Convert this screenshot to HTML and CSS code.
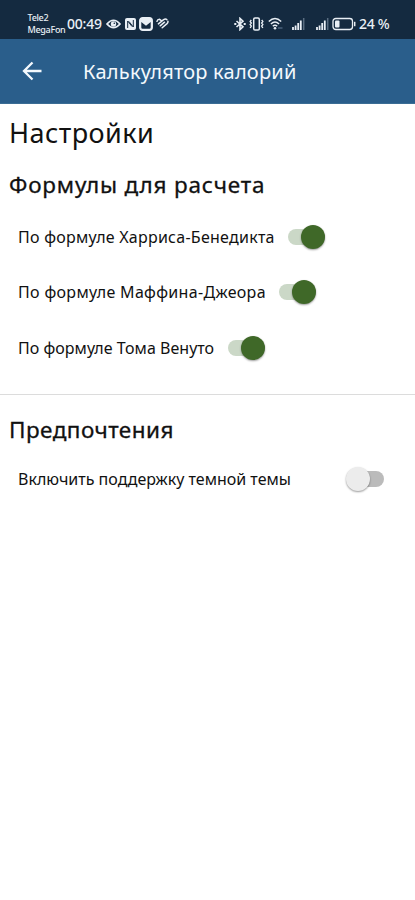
FILE: index.html
```html
<!DOCTYPE html>
<html lang="ru">
<head>
<meta charset="utf-8">
<title>Калькулятор калорий</title>
<link rel="stylesheet" href="styles.css">
</head>
<body>
<header class="status">
  <div class="carriers"><span>Tele2</span><span>MegaFon</span></div>
  <span class="time">00:49</span>
  <svg class="eye" width="15" height="12" viewBox="0 0 15 12"><path d="M1 6Q7.500-1.500 14 6Q7.500 13.500 1 6Z" fill="none" stroke="#e9eff5" stroke-width="1.700"/><circle cx="7.500" cy="6" r="2.700" fill="#e9eff5"/><circle cx="8.300" cy="5.200" r=".8" fill="#142a40"/></svg>
  <svg class="nfc" width="11" height="12" viewBox="0 0 11 12"><rect width="11" height="12" rx="2" fill="#e9eff5"/><path d="M2.700 10V3L7 8.500M8.300 2V9L4 3.500" fill="none" stroke="#142a40" stroke-width="1"/></svg>
  <svg class="mail" width="14" height="14" viewBox="0 0 14 14"><rect x=".7" y=".7" width="12.600" height="12.600" rx="3" fill="#e9eff5" stroke="#e9eff5" stroke-width="1.300"/><path d="M2.300 5L7 8.800L11.700 5V10.500Q11.700 11.700 10.500 11.700H3.500Q2.300 11.700 2.300 10.500Z" fill="#142a40"/></svg>
  <svg class="heart" width="13" height="11" viewBox="0 0 13 11"><path d="M1 3.300Q1.400 1.300 3.500 1.300L5 2.400M2.400 5.900L7.600 1.700Q9.500 .5 10.800 1.600M4.200 7.800L8.500 4.200M6.200 9.800L11 5.600Q12.200 4.400 11.900 3.200" fill="none" stroke="#e9eff5" stroke-width="1.500" stroke-linecap="round"/></svg>
  <svg class="bt" width="12" height="14" viewBox="0 0 12 14"><path d="M2.500 4L9 9.800L6 12.600V1.400L9 4.200L2.500 10" fill="none" stroke="#e9eff5" stroke-width="1.600"/><path d="M.3 7H2.300M9.700 7H11.700" stroke="#e9eff5" stroke-width="1.900"/></svg>
  <svg class="vibe" width="15" height="14" viewBox="0 0 15 14"><rect x="4.700" y="1" width="5.600" height="12" rx="1.300" fill="none" stroke="#e9eff5" stroke-width="1.500"/><path d="M2.300 3L1.200 4.500L2.300 6L1.200 7.500L2.300 9L1.200 11M12.700 3L13.800 4.500L12.700 6L13.800 7.500L12.700 9L13.800 11" fill="none" stroke="#e9eff5" stroke-width="1.400"/></svg>
  <svg class="wifi" width="15" height="13" viewBox="0 0 15 13"><path d="M.8 4.500Q7 -1.500 13.200 4.500M2.900 7Q7 3.100 11.100 7M4.800 9.300Q7 7.200 9.200 9.300" fill="none" stroke="#e9eff5" stroke-width="1.500"/><circle cx="7" cy="11.300" r="1.300" fill="#e9eff5"/><path d="M10 11H14.500" stroke="#48617a" stroke-width="1.500"/></svg>
  <svg class="sig1" width="13" height="12" viewBox="0 0 13 12"><path d="M1 9V12M3.600 7.500V12M6.200 5V12M8.800 2.500V12" stroke="#e9eff5" stroke-width="1.800"/><path d="M11.700 0V12" stroke="#586c80" stroke-width="1.500"/></svg>
  <svg class="sig2" width="13" height="12" viewBox="0 0 13 12"><path d="M1 9V12M3.600 7.500V12M6.200 5V12M8.800 2.500V12" stroke="#e9eff5" stroke-width="1.800"/><path d="M11.700 0V12" stroke="#586c80" stroke-width="1.500"/></svg>
  <svg class="battery" width="24" height="14" viewBox="0 0 24 14"><rect x="1" y="1.500" width="19.500" height="11" rx="2.800" fill="none" stroke="#e9eff5" stroke-width="1.300"/><rect x="3" y="3.500" width="4.500" height="7" rx="1" fill="#e9eff5"/><path d="M22.700 4.800V9.200" stroke="#e9eff5" stroke-width="1.500"/></svg>
  <span class="percent">24 %</span>
</header>
<nav class="appbar">
  <svg width="20" height="20" viewBox="0 0 20 20"><path d="M19.500 10H2M10.500 1.500L2 10L10.500 18.500" fill="none" stroke="#f4f9fd" stroke-width="2.300"/></svg>
  <span class="title">Калькулятор калорий</span>
</nav>
<main>
  <h1>Настройки</h1>
  <section class="formulas">
    <h2 class="h-formulas">Формулы для расчета</h2>
    <div class="row"><span class="harris">По формуле Харриса-Бенедикта</span><i class="switch on"></i></div>
    <div class="row"><span class="muffin">По формуле Маффина-Джеора</span><i class="switch on"></i></div>
    <div class="row"><span class="venuto">По формуле Тома Венуто</span><i class="switch on"></i></div>
  </section>
  <section class="prefs">
    <h2 class="h-prefs">Предпочтения</h2>
    <div class="row"><span class="dark">Включить поддержку темной темы</span><i class="switch"></i></div>
  </section>
</main>
</body>
</html>
```
FILE: styles.css
```css
* { box-sizing: border-box; }
body { margin: 0; width: 415px; height: 900px; background: #fff; color: #111; font-family: "Noto Sans", sans-serif; overflow: hidden; }
span, h1, h2 { white-space: nowrap; }
svg { flex: none; display: block; }
.status { height: 39px; padding: 8px 0 0 27.500px; display: flex; align-items: center; background: #142a40; color: #e9eff5; }
.carriers { width: 39.500px; display: flex; flex-direction: column; font-size: 9px; line-height: 12px; font-weight: 500; letter-spacing: -.3px; }
.time { width: 39px; font-size: 14px; line-height: 18px; font-weight: 500; letter-spacing: -.2px; }
.nfc { margin-left: 4px; }
.mail { margin-left: 3px; }
.heart { margin-left: 3px; }
.bt { margin-left: 65px; }
.vibe { margin-left: 3px; }
.wifi { margin-left: 4px; }
.sig1 { margin-left: 9px; }
.sig2 { margin-left: 11px; }
.battery { margin-left: 3px; }
.percent { margin-left: 3px; font-size: 14px; line-height: 18px; font-weight: 500; letter-spacing: -.3px; }
.appbar { height: 65px; padding-left: 22px; display: flex; align-items: center; background: #2a5e8b; border-bottom: 1px solid #3b6d94; }
.title { margin: 2px 0 0 41px; color: #f4f9fd; font-size: 20px; line-height: 28px; letter-spacing: .22px; }
h1, h2 { margin: 0; padding-left: 9px; }
h1 { padding-top: 11px; font-size: 27px; line-height: 36px; font-weight: 400; letter-spacing: .45px; }
h2 { font-size: 22.500px; line-height: 30px; font-weight: 400; -webkit-text-stroke: .3px #111; }
.formulas { height: 244px; padding-top: 19px; border-bottom: 1px solid #dcdcdc; }
.h-formulas { margin-bottom: 9px; letter-spacing: .8px; }
.h-prefs { letter-spacing: .45px; }
.row { height: 55.500px; padding-left: 18px; display: flex; align-items: center; font-size: 16px; line-height: 24px; }
.harris { width: 270px; letter-spacing: .26px; }
.muffin { width: 261px; letter-spacing: .33px; }
.venuto { width: 209.500px; letter-spacing: .03px; }
.dark { width: 329px; }
.prefs { padding-top: 20px; }
.prefs .row { height: 67px; }
.switch { flex: none; width: 37px; height: 24px; display: flex; align-items: center; position: relative; }
.switch::before { content: ""; width: 37px; height: 16px; border-radius: 8px; background: #bbb; }
.switch::after { content: ""; position: absolute; left: -1px; top: 0; width: 24px; height: 24px; border-radius: 50%; background: #ececec; box-shadow: 0 1px 2px #0006; }
.switch.on::before { background: #cbd8c7; }
.switch.on::after { left: 13px; background: #3f6828; }
```
